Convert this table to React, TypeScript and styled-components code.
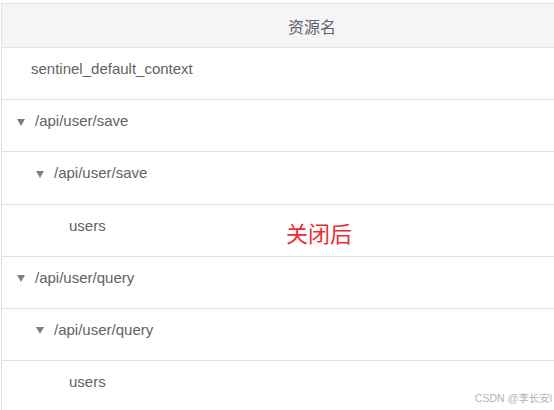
import React from 'react';
import styled, { createGlobalStyle } from 'styled-components';

const GlobalStyle = createGlobalStyle`
  html, body {
    margin: 0;
    padding: 0;
    background: #ffffff;
    overflow: hidden;
  }
  body {
    font-family: "Liberation Sans", Arial, "Noto Sans CJK SC", sans-serif;
  }
`;

const Page = styled.div`
  position: relative;
  width: 554px;
  height: 410px;
  overflow: hidden;
  padding-top: 3px;
  box-sizing: border-box;
`;

const Table = styled.div`
  width: 620px;
  margin-left: 1px;
  border-left: 1px solid #e2e3e6;
  border-top: 1px solid #e2e3e6;
`;

const HeaderCell = styled.div`
  height: 43px;
  display: flex;
  align-items: center;
  justify-content: center;
  background: #f4f5f7;
  border-bottom: 1px solid #e2e3e6;
  color: #606266;
  font-size: 16px;
  font-family: "Noto Sans CJK SC", "Liberation Sans", sans-serif;
`;

const Row = styled.div<{ $level: number }>`
  height: 51.2px;
  box-sizing: content-box;
  border-bottom: 1px solid #e2e3e6;
  display: flex;
  align-items: flex-start;
  padding-left: ${(p) => 15 + p.$level * 19}px;
  color: #606266;
  font-size: 15px;
  line-height: 20px;
`;

const Inner = styled.div`
  display: flex;
  align-items: center;
  margin-top: 11px;
`;

const Caret = styled.span`
  width: 0;
  height: 0;
  border-left: 4.5px solid transparent;
  border-right: 4.5px solid transparent;
  border-top: 7px solid #7f7f80;
  margin-right: 10px;
  margin-top: 2px;
`;

const Spacer = styled.span`
  width: 14px;
`;

const Note = styled.div`
  position: absolute;
  left: 286px;
  top: 216px;
  color: #ee2a33;
  font-size: 22px;
  font-family: "Noto Sans CJK SC", sans-serif;
`;

const Watermark = styled.div`
  position: absolute;
  right: 2px;
  bottom: 5px;
  color: #b4b4b4;
  font-size: 10.5px;
  font-family: "Liberation Sans", "Noto Sans CJK SC", sans-serif;
`;

type Item = { label: string; level: number; expandable: boolean };

const items: Item[] = [
  { label: 'sentinel_default_context', level: 0, expandable: false },
  { label: '/api/user/save', level: 0, expandable: true },
  { label: '/api/user/save', level: 1, expandable: true },
  { label: 'users', level: 2, expandable: false },
  { label: '/api/user/query', level: 0, expandable: true },
  { label: '/api/user/query', level: 1, expandable: true },
  { label: 'users', level: 2, expandable: false },
];

const App: React.FC = () => {
  return (
    <>
      <GlobalStyle />
      <Page>
        <Table>
          <HeaderCell>资源名</HeaderCell>
          {items.map((item, i) => (
            <Row key={i} $level={item.level}>
              <Inner>
                {item.expandable ? <Caret /> : <Spacer />}
                {item.label}
              </Inner>
            </Row>
          ))}
        </Table>
        <Note>关闭后</Note>
        <Watermark>CSDN @李长安l</Watermark>
      </Page>
    </>
  );
};

export default App;
